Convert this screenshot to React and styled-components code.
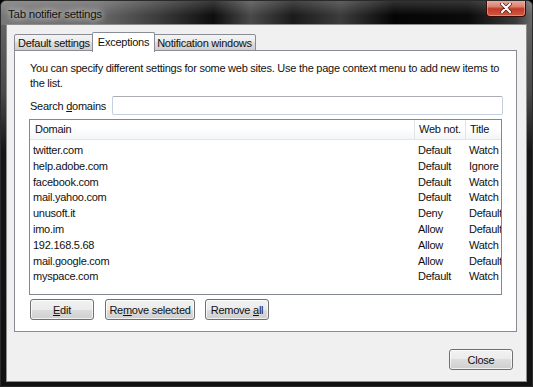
import React from "react";
import styled, { createGlobalStyle } from "styled-components";

const GlobalStyle = createGlobalStyle`
  html, body {
    margin: 0;
    padding: 0;
    width: 533px;
    height: 387px;
    overflow: hidden;
    background: #000;
  }
  body {
    font-family: "Liberation Sans", Arial, sans-serif;
    font-size: 11px;
    letter-spacing: -0.25px;
    color: #111;
  }
  * { box-sizing: border-box; }
`;

const Window = styled.div`
  width: 533px;
  height: 387px;
  display: flex;
  flex-direction: column;
  background: linear-gradient(180deg, #6c6c6c 0, #4a4a4a 90px, #161616 150px, #111 100%);
  border: 1px solid #2a2a2a;
  border-radius: 6px 6px 0 0;
  overflow: hidden;
`;

const TitleBar = styled.div`
  height: 24px;
  flex: none;
  display: flex;
  justify-content: space-between;
  align-items: flex-start;
  padding-left: 7px;
  background:
    linear-gradient(180deg, rgba(255, 255, 255, 0.18), rgba(255, 255, 255, 0) 60%),
    linear-gradient(90deg, #777 0%, #6a6a6a 18%, #3a3a3a 30%, #0e0e0e 40%, #4a4a4a 47%, #1b1b1b 55%, #3c3c3c 64%, #050505 74%, #0a0a0a 88%, #3a3a3a 97%, #6a6a6a 100%);
`;

const Title = styled.span`
  line-height: 26px;
  font-size: 11.5px;
  color: #111;
  text-shadow: 0 0 6px rgba(255, 255, 255, 0.9), 0 0 10px rgba(255, 255, 255, 0.6);
`;

const CloseBox = styled.div`
  width: 40px;
  height: 17px;
  margin-right: 6px;
  margin-top: -1px;
  display: flex;
  align-items: center;
  justify-content: center;
  border: 1px solid #3a0c08;
  border-top: none;
  border-radius: 0 0 4px 4px;
  background: linear-gradient(180deg, #eab1a4 0%, #d98473 40%, #c13b28 55%, #cf5a40 100%);
  box-shadow: inset 0 0 0 1px rgba(255, 200, 190, 0.45);
`;

const Client = styled.div`
  flex: 1;
  margin: 0 6px 5px 6px;
  background: #f0f0f0;
  box-shadow: 0 0 0 1px #8e8e8e;
  padding: 7px 9px 0 7px;
  display: flex;
  flex-direction: column;
`;

const TabStrip = styled.div`
  display: flex;
  align-items: flex-end;
  height: 19px;
  position: relative;
  z-index: 1;
`;

const Tab = styled.div`
  height: ${({ active }) => (active ? "20px" : "17px")};
  margin: ${({ active }) => (active ? "0 -2px -1px -2px" : "0")};
  padding: ${({ active }) => (active ? "0 5px 1px 5px" : "0 3px")};
  display: flex;
  align-items: center;
  border: 1px solid #898c95;
  border-bottom: ${({ active }) => (active ? "none" : "1px solid #898c95")};
  border-radius: 2px 2px 0 0;
  background: ${({ active }) =>
    active ? "#fff" : "linear-gradient(180deg, #f3f3f3 0%, #ebebeb 50%, #dddddd 50%, #cfcfcf 100%)"};
  position: relative;
  z-index: ${({ active }) => (active ? 2 : 1)};
  & + & {
    border-left: ${({ active }) => (active ? "1px solid #898c95" : "none")};
  }
`;

const Panel = styled.div`
  height: 282px;
  flex: none;
  margin-top: -1px;
  background: #fff;
  border: 1px solid #898c95;
  padding: 10px 14px 0 14px;
  display: flex;
  flex-direction: column;
`;

const Description = styled.p`
  margin: 0;
  line-height: 15px;
  padding-left: 1px;
`;

const SearchRow = styled.div`
  display: flex;
  align-items: center;
  margin-top: 5px;
  height: 19px;
`;

const Label = styled.label`
  width: 83px;
  flex: none;
  padding-left: 1px;
`;

const SearchInput = styled.input`
  flex: 1;
  height: 19px;
  margin-right: -1px;
  border: 1px solid #c5d0de;
  border-top-color: #abadb3;
  border-radius: 2px;
  outline: none;
  background: #fff;
`;

const List = styled.div`
  margin-top: 4px;
  height: 176px;
  border: 1px solid #828790;
  background: #fff;
  overflow: hidden;
`;

const Grid = styled.div`
  display: grid;
  grid-template-columns: 385px 51px 52px;
`;

const HeaderRow = styled(Grid)`
  height: 20px;
  background: linear-gradient(180deg, #ffffff 0%, #ffffff 45%, #f4f5f7 100%);
  border-bottom: 1px solid #e3e5e8;
  margin-bottom: 3px;
`;

const HeaderCell = styled.div`
  line-height: 19px;
  padding-left: ${({ first }) => (first ? "5px" : "4px")};
  border-right: 1px solid #e1e3e6;
  white-space: nowrap;
`;

const Row = styled(Grid)`
  height: 15.8px;
  line-height: 15.8px;
`;

const Cell = styled.div`
  padding-left: 3px;
  white-space: nowrap;
`;

const ButtonRow = styled.div`
  display: flex;
  margin-top: 4px;
  padding-left: 1px;
`;

const Button = styled.button`
  height: 21px;
  width: ${({ w }) => w}px;
  margin-right: ${({ gap }) => gap || 0}px;
  padding: 0;
  font: inherit;
  letter-spacing: inherit;
  color: #111;
  border: 1px solid #707070;
  border-radius: 3px;
  background: linear-gradient(180deg, #f2f2f2 0%, #ebebeb 50%, #dddddd 50%, #cfcfcf 100%);
  box-shadow: inset 0 0 0 1px rgba(255, 255, 255, 0.7);
`;

const Footer = styled.div`
  display: flex;
  justify-content: flex-end;
  padding: 17px 4px 0 0;
`;

const rows = [
  ["twitter.com", "Default", "Watch"],
  ["help.adobe.com", "Default", "Ignore"],
  ["facebook.com", "Default", "Watch"],
  ["mail.yahoo.com", "Default", "Watch"],
  ["unusoft.it", "Deny", "Default"],
  ["imo.im", "Allow", "Default"],
  ["192.168.5.68", "Allow", "Watch"],
  ["mail.google.com", "Allow", "Default"],
  ["myspace.com", "Default", "Watch"],
];

const CloseGlyph = () => (
  <svg width="12" height="10" viewBox="0 0 12 10">
    <path d="M2 1 L10 9 M10 1 L2 9" stroke="#4a1a14" strokeWidth="3.6" strokeLinecap="round" />
    <path d="M2 1 L10 9 M10 1 L2 9" stroke="#fff" strokeWidth="2.2" strokeLinecap="round" />
  </svg>
);

export default function App() {
  return (
    <>
      <GlobalStyle />
      <Window>
        <TitleBar>
          <Title>Tab notifier settings</Title>
          <CloseBox>
            <CloseGlyph />
          </CloseBox>
        </TitleBar>
        <Client>
          <TabStrip>
            <Tab>Default settings</Tab>
            <Tab active>Exceptions</Tab>
            <Tab>Notification windows</Tab>
          </TabStrip>
          <Panel>
            <Description>
              You can specify different settings for some web sites. Use the page context menu to add new items to
              the list.
            </Description>
            <SearchRow>
              <Label>
                Search <u>d</u>omains
              </Label>
              <SearchInput />
            </SearchRow>
            <List>
              <HeaderRow>
                <HeaderCell first>Domain</HeaderCell>
                <HeaderCell>Web not.</HeaderCell>
                <HeaderCell>Title</HeaderCell>
              </HeaderRow>
              {rows.map(([domain, web, title]) => (
                <Row key={domain}>
                  <Cell>{domain}</Cell>
                  <Cell>{web}</Cell>
                  <Cell>{title}</Cell>
                </Row>
              ))}
            </List>
            <ButtonRow>
              <Button w={64} gap={11}>
                <u>E</u>dit
              </Button>
              <Button w={90} gap={10}>
                Re<u>m</u>ove selected
              </Button>
              <Button w={64}>
                Remove <u>a</u>ll
              </Button>
            </ButtonRow>
          </Panel>
          <Footer>
            <Button w={64}>Close</Button>
          </Footer>
        </Client>
      </Window>
    </>
  );
}
